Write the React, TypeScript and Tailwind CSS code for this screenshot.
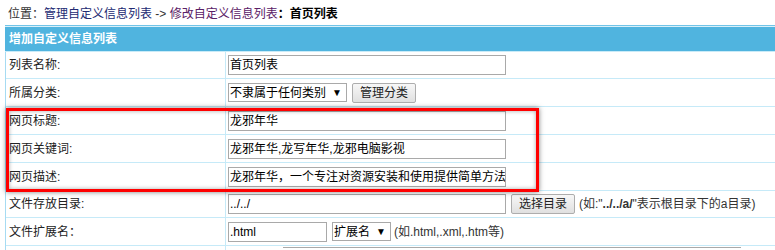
import React from "react";

const BORDER = "border-[#c6eaf8]";

function Row({
  label,
  children,
  h = "h-[28px]",
}: {
  label: React.ReactNode;
  children?: React.ReactNode;
  h?: string;
}) {
  return (
    <div className={`flex ${h} border-b ${BORDER}`}>
      <div
        className={`w-[220px] shrink-0 border-r ${BORDER} pl-[3px] flex items-center text-[#222]`}
      >
        {label}
      </div>
      <div className="flex items-center pl-[2px] gap-[5px] whitespace-nowrap">
        {children}
      </div>
    </div>
  );
}

function Input({ value, w = "w-[278px]" }: { value: string; w?: string }) {
  return (
    <div
      className={`${w} h-[20px] border border-[#a9a9a9] bg-white pl-[1px] flex items-center overflow-hidden whitespace-nowrap text-[12px] text-black`}
    >
      {value}
    </div>
  );
}

function Select({ value, w }: { value: string; w: string }) {
  return (
    <div
      className={`${w} h-[19px] border border-[#a9a9a9] bg-white pl-[1px] pr-[4px] flex items-center justify-between text-[12px] text-black`}
    >
      <span>{value}</span>
      <span className="text-[10px] leading-none">▼</span>
    </div>
  );
}

function Button({ label }: { label: string }) {
  return (
    <div className="w-[64px] h-[20px] border border-[#adadad] rounded-[2px] bg-gradient-to-b from-[#f7f7f7] to-[#e0e0e0] flex items-center justify-center text-[12px] text-[#222]">
      {label}
    </div>
  );
}

export default function App() {
  return (
    <div className="relative w-[775px] h-[250px] overflow-hidden bg-white font-['Liberation_Sans','Noto_Sans_CJK_SC',sans-serif] text-[12px] leading-none">
      {/* breadcrumb */}
      <div className="h-[25px] pl-[8px] pt-[3px] flex items-center whitespace-nowrap text-[#333]">
        <span>位置：</span>
        <span className="text-[#222a72]">管理自定义信息列表</span>
        <span>&nbsp;-&gt;&nbsp;</span>
        <span className="text-[#5a2066]">修改自定义信息列表</span>
        <span className="text-black font-bold">：首页列表</span>
      </div>

      <div className="ml-[5px] w-[770px]">
        {/* header */}
        <div className="border-t border-[#72c4e7]">
          <div className="border-t border-[#d9f0fa] h-[26px] bg-[#50b4df] border-b border-b-[#c9ebf8] flex items-center pl-[4px] text-white font-bold">
            增加自定义信息列表
          </div>
        </div>

        <div className="border-l border-[#a6dbf2]">
          <Row label="列表名称:" h="h-[27px]">
            <Input value="首页列表" />
          </Row>
          <Row label="所属分类:">
            <Select value="不隶属于任何类别" w="w-[119px]" />
            <Button label="管理分类" />
          </Row>
          <Row label="网页标题:">
            <Input value="龙邪年华" />
          </Row>
          <Row label="网页关键词:">
            <Input value="龙邪年华,龙写年华,龙邪电脑影视" />
          </Row>
          <Row label="网页描述:">
            <Input value="龙邪年华，一个专注对资源安装和使用提供简单方法" />
          </Row>
          <Row label="文件存放目录:" h="h-[27px]">
            <Input value="../../" />
            <Button label="选择目录" />
            <span className="-ml-[1px] text-[#333]">
              (如:"<b className="font-bold">../../a/</b>"表示根目录下的a目录)
            </span>
          </Row>
          <Row label="文件扩展名：">
            <Input value=".html" w="w-[99px]" />
            <Select value="扩展名" w="w-[59px]" />
            <span className="-ml-[2px] text-[#333]">(如.html,.xml,.htm等)</span>
          </Row>
          <div className="flex h-[40px]">
            <div className={`w-[220px] shrink-0 border-r ${BORDER}`} />
            <div className="pl-[57px] pt-[1px]">
              <div className="w-[458px] h-[40px] border-t border-[#a9a9a9]" />
            </div>
          </div>
        </div>
      </div>

      {/* red annotation box */}
      <div className="absolute left-[6px] top-[108px] w-[533px] h-[84px] border-[3px] border-[#ff0000] shadow-[0_0_5px_rgba(0,0,0,0.5),inset_0_0_4px_rgba(0,0,0,0.35)] pointer-events-none" />
    </div>
  );
}
